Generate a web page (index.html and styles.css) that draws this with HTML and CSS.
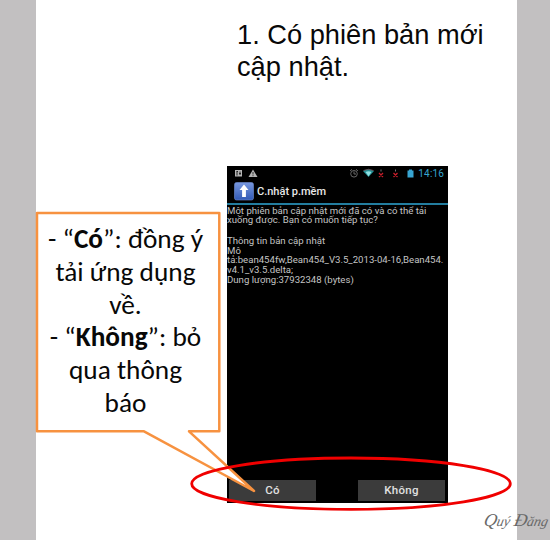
FILE: index.html
```html
<!DOCTYPE html>
<html lang="vi">
<head>
<meta charset="utf-8">
<title>Cập nhật phần mềm</title>
<link rel="stylesheet" href="styles.css">
</head>
<body>
<main class="slide">
  <h1 class="title"><span class="line">1. Có phiên bản mới</span><span class="line">cập nhật.</span></h1>
  <div class="content">
    <section class="note">
      <p class="line">- “<b>Có</b>”: đồng ý</p>
      <p class="line">tải ứng dụng</p>
      <p class="line">về.</p>
      <p class="line">- “<b>Không</b>”: bỏ</p>
      <p class="line">qua thông</p>
      <p class="line">báo</p>
    </section>
    <section class="phone">
      <div class="status">
        <svg class="left-icons" width="32" height="12" viewBox="0 0 32 12">
          <rect x="1" y="3" width="7" height="6.5" fill="#b5b5b5"/>
          <path d="M3 4.500v4M2.500 4.500H4M6 4.500v3.500M5 6.500h2" stroke="#222" stroke-width="1" fill="none"/>
          <path d="M19 2.500L23.500 10H14.500Z" fill="#b4b4b4"/>
          <path d="M19 5v2.500M19 8.200v1" stroke="#333" stroke-width="1"/>
        </svg>
        <svg class="right-icons" width="66" height="12" viewBox="0 0 66 12">
          <g fill="none" stroke="#666" stroke-width="1"><circle cx="5" cy="6.800" r="3.300"/><path d="M5 4.500v2.500h2M1 4L3 2.300M9 4L7 2.300"/></g>
          <path d="M14 4Q19.500 .5 25 4L19.500 10Z" fill="#238d92"/>
          <path d="M16.500 5Q19.500 3.500 22.500 5L19.500 9.300Z" fill="#8fe0e2"/>
          <path d="M14.500 3.500Q19.500 1 24.500 3.500" fill="none" stroke="#785057" stroke-width=".8"/>
          <path d="M30 6l4 4M34 6l-4 4M44.500 6l4 4M48.500 6l-4 4" stroke="#c51d29" stroke-width="1.300"/>
          <path d="M32 2.500v2M46.500 2.500v2" stroke="#777" stroke-width="1"/>
          <path d="M58.500 3.500h1.500v-1h3v1h1.500v7h-6Z" fill="#38a5d2"/>
        </svg>
        <span class="clock">14:16</span>
      </div>
      <header class="appbar">
        <svg width="20" height="19" viewBox="0 0 20 19">
          <defs><linearGradient id="blue" x2="0" y2="1"><stop stop-color="#7898df"/><stop offset="1" stop-color="#3159b5"/></linearGradient></defs>
          <rect x=".5" y=".5" width="19" height="17.500" rx="2" fill="url(#blue)" stroke="#6e8fd5" stroke-width=".6"/>
          <path d="M10 2.500L14.500 8H11.900V15H8.100V8H5.500Z" fill="#fff"/>
        </svg>
        <span class="line app-name">C.nhật p.mềm</span>
      </header>
      <div class="message">
        <p class="line">Một phiên bản cập nhật mới đã có và có thể tải</p>
        <p class="line">xuống được. Bạn có muốn tiếp tục?</p>
        <p class="line info">Thông tin bản cập nhật</p>
        <p class="line">Mô</p>
        <p class="line">tả:bean454fw,Bean454_V3.5_2013-04-16,Bean454.</p>
        <p class="line">v4.1_v3.5.delta;</p>
        <p class="line">Dung lượng:37932348 (bytes)</p>
      </div>
      <div class="actions"><button>Có</button><button>Không</button></div>
    </section>
  </div>
</main>
<svg class="marks" width="550" height="540" viewBox="0 0 550 540">
  <path d="M226 464L254 491L226 475.500Z" fill="#fff"/>
  <path d="M37 213H219.300V431.300H189L254 491L144 431.300H37Z" fill="none" stroke="#f79240" stroke-width="2.500" stroke-linejoin="round"/>
  <ellipse cx="351" cy="483.700" rx="159.300" ry="25.700" fill="none" stroke="#f00000" stroke-width="2.800"/>
</svg>
<div class="signature"><span><span class="cap">Q</span>uý</span><span><span class="cap">Đ</span>ăng</span></div>
</body>
</html>
```

FILE: styles.css
```css
* { box-sizing: border-box; }
body { margin: 0; width: 550px; height: 540px; overflow: hidden; background: #c2c0c1; position: relative; }
.slide { width: 481px; height: 540px; margin-left: 36px; background: #fff; display: flex; flex-direction: column; }
p, h1 { margin: 0; font-weight: normal; }
.line { display: block; white-space: nowrap; }
.title { height: 166px; padding: 19px 0 0 200.500px; font: 28px/32px "Liberation Sans", sans-serif; color: #080808; }
.title .line { transform: scaleX(.973); transform-origin: 0 50%; }
.content { display: flex; align-items: flex-start; }
.note { width: 184px; height: 220px; margin: 46px 7px 0 0; padding: 11px 5px 0 0; font: 27.300px/32.800px Carlito, Lato, sans-serif; color: #080808; display: flex; flex-direction: column; align-items: center; }
.phone { width: 221px; height: 337px; background: #000; color: #c4c4c4; font-family: Roboto, sans-serif; display: flex; flex-direction: column; }
.status { height: 14px; display: flex; align-items: center; padding: 0 4px 0 7px; }
.left-icons { margin-right: auto; }
.clock { color: #36a5cf; font-size: 10px; line-height: 14px; letter-spacing: .15px; margin-left: 3px; padding-top: 1px; }
.appbar { height: 25px; border-bottom: 2px solid #237d9f; display: flex; align-items: center; padding-left: 7px; gap: 3px; color: #e8e8e8; font-size: 11px; }
.app-name { font-weight: 500; }
.message { font-size: 8.500px; line-height: 9.700px; padding-top: 1.500px; flex: 1; }
.message .line { transform: scaleX(1.13); transform-origin: 0 50%; width: 195px; }
.info { margin-top: 11px; }
.actions { display: flex; justify-content: space-between; padding: 0 3px 2px 2px; }
button { width: 87px; height: 21px; border: 0; padding: 0; background: #3b3b3b; color: #e0e0e0; font: 500 11.500px/21px Roboto, sans-serif; letter-spacing: .3px; }
.marks { position: absolute; left: 0; top: 0; }
.signature { position: absolute; left: 484px; top: 508px; display: flex; gap: 4px; font: italic 14px/24px "Liberation Serif", serif; color: #686868; white-space: nowrap; transform: skewX(-12deg); }
.cap { font-size: 18px; }
```
